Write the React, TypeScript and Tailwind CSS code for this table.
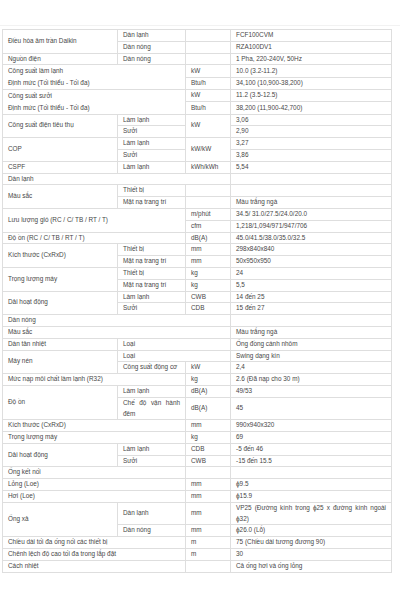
import React from "react";

const base =
  "border border-[#dedede] px-[5px] py-0 align-middle whitespace-nowrap overflow-hidden";

function T({
  children,
  rs,
  cs,
  cls = "",
}: {
  children?: React.ReactNode;
  rs?: number;
  cs?: number;
  cls?: string;
}) {
  return (
    <td rowSpan={rs} colSpan={cs} className={`${base} ${cls}`}>
      {children}
    </td>
  );
}

function R({ children }: { children: React.ReactNode }) {
  return <tr className="h-[11.8px]">{children}</tr>;
}

export default function App() {
  return (
    <div className="w-[400px] h-[600px] bg-white overflow-hidden">
      <div className="mt-[25px] border-t border-[#f2f2f2] pt-[3px]">
        <table className="ml-[2px] w-[389px] table-fixed border-collapse text-[6.4px] leading-[10.8px] text-[#474747] font-['Liberation_Sans',Arial,sans-serif]">
          <colgroup>
            <col className="w-[115px]" />
            <col className="w-[68px]" />
            <col className="w-[45px]" />
            <col className="w-[161px]" />
          </colgroup>
          <tbody>
            <R>
              <T rs={2}>Điều hòa âm trần Daikin</T>
              <T>Dàn lạnh</T>
              <T />
              <T>FCF100CVM</T>
            </R>
            <R>
              <T>Dàn nóng</T>
              <T />
              <T>RZA100DV1</T>
            </R>
            <R>
              <T>Nguồn điện</T>
              <T>Dàn nóng</T>
              <T />
              <T>1 Pha, 220-240V, 50Hz</T>
            </R>
            <R>
              <T rs={2} cs={2}>
                <div className="leading-[11.8px]">
                  Công suất làm lạnh
                  <br />
                  Định mức (Tối thiểu - Tối đa)
                </div>
              </T>
              <T>kW</T>
              <T>10.0 (3.2-11.2)</T>
            </R>
            <R>
              <T>Btu/h</T>
              <T>34,100 (10,900-38,200)</T>
            </R>
            <R>
              <T rs={2} cs={2}>
                <div className="leading-[11.8px]">
                  Công suất sưởi
                  <br />
                  Định mức (Tối thiểu - Tối đa)
                </div>
              </T>
              <T>kW</T>
              <T>11.2 (3.5-12.5)</T>
            </R>
            <R>
              <T>Btu/h</T>
              <T>38,200 (11,900-42,700)</T>
            </R>
            <R>
              <T rs={2}>Công suất điện tiêu thụ</T>
              <T>Làm lạnh</T>
              <T rs={2}>kW</T>
              <T>3,06</T>
            </R>
            <R>
              <T>Sưởi</T>
              <T>2,90</T>
            </R>
            <R>
              <T rs={2}>COP</T>
              <T>Làm lạnh</T>
              <T rs={2}>kW/kW</T>
              <T>3,27</T>
            </R>
            <R>
              <T>Sưởi</T>
              <T>3,86</T>
            </R>
            <R>
              <T>CSPF</T>
              <T>Làm lạnh</T>
              <T>kWh/kWh</T>
              <T>5,54</T>
            </R>
            <R>
              <T cs={3}>Dàn lạnh</T>
              <T />
            </R>
            <R>
              <T rs={2}>Màu sắc</T>
              <T>Thiết bị</T>
              <T />
              <T />
            </R>
            <R>
              <T>Mặt nạ trang trí</T>
              <T />
              <T>Màu trắng ngà</T>
            </R>
            <R>
              <T rs={2} cs={2}>
                Lưu lượng gió (RC / C/ TB / RT / T)
              </T>
              <T>m/phút</T>
              <T>34.5/ 31.0/27.5/24.0/20.0</T>
            </R>
            <R>
              <T>cfm</T>
              <T>1,218/1,094/971/947/706</T>
            </R>
            <R>
              <T cs={2}>Độ ồn (RC / C/ TB / RT / T)</T>
              <T>dB(A)</T>
              <T>45.0/41.5/38.0/35.0/32.5</T>
            </R>
            <R>
              <T rs={2}>Kích thước (CxRxD)</T>
              <T>Thiết bị</T>
              <T>mm</T>
              <T>298x840x840</T>
            </R>
            <R>
              <T>Mặt nạ trang trí</T>
              <T>mm</T>
              <T>50x950x950</T>
            </R>
            <R>
              <T rs={2}>Trọng lượng máy</T>
              <T>Thiết bị</T>
              <T>kg</T>
              <T>24</T>
            </R>
            <R>
              <T>Mặt nạ trang trí</T>
              <T>kg</T>
              <T>5,5</T>
            </R>
            <R>
              <T rs={2}>Dải hoạt động</T>
              <T>Làm lạnh</T>
              <T>CWB</T>
              <T>14 đến 25</T>
            </R>
            <R>
              <T>Sưởi</T>
              <T>CDB</T>
              <T>15 đến 27</T>
            </R>
            <R>
              <T cs={3}>Dàn nóng</T>
              <T />
            </R>
            <R>
              <T cs={3}>Màu sắc</T>
              <T>Màu trắng ngà</T>
            </R>
            <R>
              <T>Dàn tản nhiệt</T>
              <T cs={2}>Loại</T>
              <T>Ống đồng cánh nhôm</T>
            </R>
            <R>
              <T rs={2}>Máy nén</T>
              <T cs={2}>Loại</T>
              <T>Swing dạng kín</T>
            </R>
            <R>
              <T>Công suất động cơ</T>
              <T>kW</T>
              <T>2,4</T>
            </R>
            <R>
              <T cs={2}>Mức nạp môi chất làm lạnh (R32)</T>
              <T>kg</T>
              <T>2.6 (Đã nạp cho 30 m)</T>
            </R>
            <R>
              <T rs={2}>Độ ồn</T>
              <T>Làm lạnh</T>
              <T>dB(A)</T>
              <T>49/53</T>
            </R>
            <R>
              <T cls="whitespace-normal">
                <div className="text-justify [text-align-last:justify]">
                  Chế độ vận hành
                </div>
                <div>đêm</div>
              </T>
              <T>dB(A)</T>
              <T>45</T>
            </R>
            <R>
              <T cs={2}>Kích thước (CxRxD)</T>
              <T>mm</T>
              <T>990x940x320</T>
            </R>
            <R>
              <T cs={2}>Trọng lượng máy</T>
              <T>kg</T>
              <T>69</T>
            </R>
            <R>
              <T rs={2}>Dải hoạt động</T>
              <T>Làm lạnh</T>
              <T>CDB</T>
              <T>-5 đến 46</T>
            </R>
            <R>
              <T>Sưởi</T>
              <T>CWB</T>
              <T>-15 đến 15.5</T>
            </R>
            <R>
              <T cs={2}>Ống kết nối</T>
              <T />
              <T />
            </R>
            <R>
              <T cs={2}>Lỏng (Loe)</T>
              <T>mm</T>
              <T>ϕ9.5</T>
            </R>
            <R>
              <T cs={2}>Hơi (Loe)</T>
              <T>mm</T>
              <T>ϕ15.9</T>
            </R>
            <R>
              <T rs={2}>Ống xả</T>
              <T>Dàn lạnh</T>
              <T>mm</T>
              <T cls="whitespace-normal">
                <div className="text-justify [text-align-last:justify]">
                  VP25 (Đường kính trong ϕ25 x đường kính ngoài
                </div>
                <div>ϕ32)</div>
              </T>
            </R>
            <R>
              <T>Dàn nóng</T>
              <T>mm</T>
              <T>ϕ26.0 (Lỗ)</T>
            </R>
            <R>
              <T cs={2}>Chiều dài tối đa ống nối các thiết bị</T>
              <T>m</T>
              <T>75 (Chiều dài tương đương 90)</T>
            </R>
            <R>
              <T cs={2}>Chênh lệch độ cao tối đa trong lắp đặt</T>
              <T>m</T>
              <T>30</T>
            </R>
            <R>
              <T cs={2}>Cách nhiệt</T>
              <T />
              <T>Cả ống hơi và ống lỏng</T>
            </R>
          </tbody>
        </table>
      </div>
    </div>
  );
}
